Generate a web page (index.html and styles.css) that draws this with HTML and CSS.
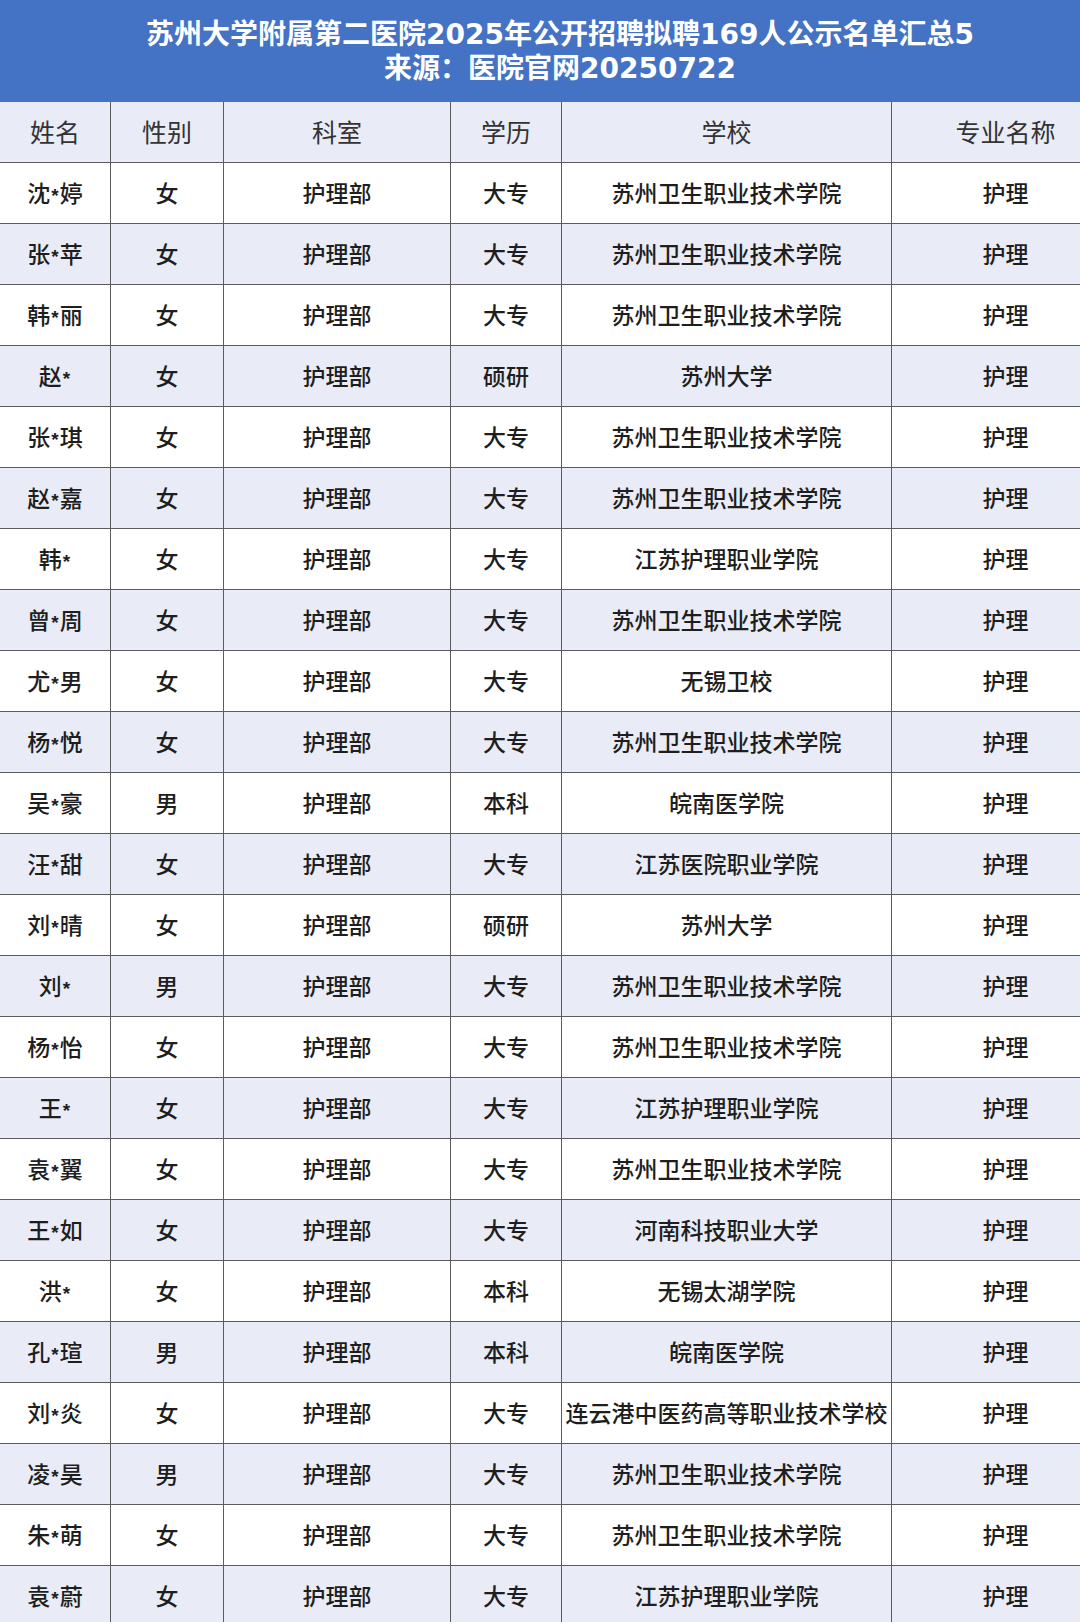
FILE: index.html
```html
<!DOCTYPE html>
<html lang="zh-CN">
<head>
<meta charset="utf-8">
<title>苏州大学附属第二医院2025年公开招聘拟聘169人公示名单汇总5</title>
<link rel="stylesheet" href="styles.css">
</head>
<body>
<div class="sheet">
  <div class="banner">
    <div class="banner-line">苏州大学附属第二医院2025年公开招聘拟聘169人公示名单汇总5</div>
    <div class="banner-line">来源：医院官网20250722</div>
  </div>
  <div class="row head">
    <div class="cell">姓名</div><div class="cell">性别</div><div class="cell">科室</div><div class="cell">学历</div><div class="cell">学校</div><div class="cell">专业名称</div>
  </div>
  <div class="row"><div class="cell">沈<span class="star">*</span>婷</div><div class="cell">女</div><div class="cell">护理部</div><div class="cell">大专</div><div class="cell">苏州卫生职业技术学院</div><div class="cell">护理</div></div>
  <div class="row alt"><div class="cell">张<span class="star">*</span>苹</div><div class="cell">女</div><div class="cell">护理部</div><div class="cell">大专</div><div class="cell">苏州卫生职业技术学院</div><div class="cell">护理</div></div>
  <div class="row"><div class="cell">韩<span class="star">*</span>丽</div><div class="cell">女</div><div class="cell">护理部</div><div class="cell">大专</div><div class="cell">苏州卫生职业技术学院</div><div class="cell">护理</div></div>
  <div class="row alt"><div class="cell">赵<span class="star">*</span></div><div class="cell">女</div><div class="cell">护理部</div><div class="cell">硕研</div><div class="cell">苏州大学</div><div class="cell">护理</div></div>
  <div class="row"><div class="cell">张<span class="star">*</span>琪</div><div class="cell">女</div><div class="cell">护理部</div><div class="cell">大专</div><div class="cell">苏州卫生职业技术学院</div><div class="cell">护理</div></div>
  <div class="row alt"><div class="cell">赵<span class="star">*</span>嘉</div><div class="cell">女</div><div class="cell">护理部</div><div class="cell">大专</div><div class="cell">苏州卫生职业技术学院</div><div class="cell">护理</div></div>
  <div class="row"><div class="cell">韩<span class="star">*</span></div><div class="cell">女</div><div class="cell">护理部</div><div class="cell">大专</div><div class="cell">江苏护理职业学院</div><div class="cell">护理</div></div>
  <div class="row alt"><div class="cell">曾<span class="star">*</span>周</div><div class="cell">女</div><div class="cell">护理部</div><div class="cell">大专</div><div class="cell">苏州卫生职业技术学院</div><div class="cell">护理</div></div>
  <div class="row"><div class="cell">尤<span class="star">*</span>男</div><div class="cell">女</div><div class="cell">护理部</div><div class="cell">大专</div><div class="cell">无锡卫校</div><div class="cell">护理</div></div>
  <div class="row alt"><div class="cell">杨<span class="star">*</span>悦</div><div class="cell">女</div><div class="cell">护理部</div><div class="cell">大专</div><div class="cell">苏州卫生职业技术学院</div><div class="cell">护理</div></div>
  <div class="row"><div class="cell">吴<span class="star">*</span>豪</div><div class="cell">男</div><div class="cell">护理部</div><div class="cell">本科</div><div class="cell">皖南医学院</div><div class="cell">护理</div></div>
  <div class="row alt"><div class="cell">汪<span class="star">*</span>甜</div><div class="cell">女</div><div class="cell">护理部</div><div class="cell">大专</div><div class="cell">江苏医院职业学院</div><div class="cell">护理</div></div>
  <div class="row"><div class="cell">刘<span class="star">*</span>晴</div><div class="cell">女</div><div class="cell">护理部</div><div class="cell">硕研</div><div class="cell">苏州大学</div><div class="cell">护理</div></div>
  <div class="row alt"><div class="cell">刘<span class="star">*</span></div><div class="cell">男</div><div class="cell">护理部</div><div class="cell">大专</div><div class="cell">苏州卫生职业技术学院</div><div class="cell">护理</div></div>
  <div class="row"><div class="cell">杨<span class="star">*</span>怡</div><div class="cell">女</div><div class="cell">护理部</div><div class="cell">大专</div><div class="cell">苏州卫生职业技术学院</div><div class="cell">护理</div></div>
  <div class="row alt"><div class="cell">王<span class="star">*</span></div><div class="cell">女</div><div class="cell">护理部</div><div class="cell">大专</div><div class="cell">江苏护理职业学院</div><div class="cell">护理</div></div>
  <div class="row"><div class="cell">袁<span class="star">*</span>翼</div><div class="cell">女</div><div class="cell">护理部</div><div class="cell">大专</div><div class="cell">苏州卫生职业技术学院</div><div class="cell">护理</div></div>
  <div class="row alt"><div class="cell">王<span class="star">*</span>如</div><div class="cell">女</div><div class="cell">护理部</div><div class="cell">大专</div><div class="cell">河南科技职业大学</div><div class="cell">护理</div></div>
  <div class="row"><div class="cell">洪<span class="star">*</span></div><div class="cell">女</div><div class="cell">护理部</div><div class="cell">本科</div><div class="cell">无锡太湖学院</div><div class="cell">护理</div></div>
  <div class="row alt"><div class="cell">孔<span class="star">*</span>瑄</div><div class="cell">男</div><div class="cell">护理部</div><div class="cell">本科</div><div class="cell">皖南医学院</div><div class="cell">护理</div></div>
  <div class="row"><div class="cell">刘<span class="star">*</span>炎</div><div class="cell">女</div><div class="cell">护理部</div><div class="cell">大专</div><div class="cell">连云港中医药高等职业技术学校</div><div class="cell">护理</div></div>
  <div class="row alt"><div class="cell">凌<span class="star">*</span>昊</div><div class="cell">男</div><div class="cell">护理部</div><div class="cell">大专</div><div class="cell">苏州卫生职业技术学院</div><div class="cell">护理</div></div>
  <div class="row"><div class="cell">朱<span class="star">*</span>萌</div><div class="cell">女</div><div class="cell">护理部</div><div class="cell">大专</div><div class="cell">苏州卫生职业技术学院</div><div class="cell">护理</div></div>
  <div class="row alt"><div class="cell">袁<span class="star">*</span>蔚</div><div class="cell">女</div><div class="cell">护理部</div><div class="cell">大专</div><div class="cell">江苏护理职业学院</div><div class="cell">护理</div></div>
</div>
</body>
</html>
```

FILE: styles.css
```css
html, body {
  margin: 0;
  padding: 0;
  background: #ffffff;
  overflow: hidden;
}
body {
  width: 1080px;
  height: 1622px;
  font-family: "Noto Sans CJK SC", "Noto Sans", sans-serif;
  color: #222222;
}
.sheet {
  width: 1120px;
}
.banner {
  height: 102px;
  box-sizing: border-box;
  padding-top: 18px;
  background: #4472c4;
  color: #ffffff;
  text-align: center;
  font-family: "DejaVu Sans", "Noto Sans CJK SC", sans-serif;
  font-weight: 700;
  font-size: 28px;
}
.banner-line {
  height: 34px;
  line-height: 34px;
  white-space: nowrap;
}
.row {
  display: grid;
  grid-template-columns: 111px 113px 227px 111px 330px 228px;
  height: 61px;
  box-sizing: border-box;
  border-bottom: 1px solid #5c5c5c;
  background: #ffffff;
}
.row.alt,
.row.head {
  background: #e9ecf6;
}
.cell {
  display: flex;
  align-items: center;
  justify-content: center;
  box-sizing: border-box;
  padding-bottom: 2px;
  border-right: 1px solid #5c5c5c;
  font-size: 23px;
  font-weight: 500;
  white-space: nowrap;
  color: #1e1e1e;
}
.star {
  display: inline-block;
  font-family: "Liberation Sans", sans-serif;
  font-weight: 700;
  font-size: 19px;
  line-height: 1;
  margin: 0 1px;
  transform: translateY(3px);
}
.head .cell {
  font-size: 25px;
  font-weight: 400;
  color: #333333;
}
```
